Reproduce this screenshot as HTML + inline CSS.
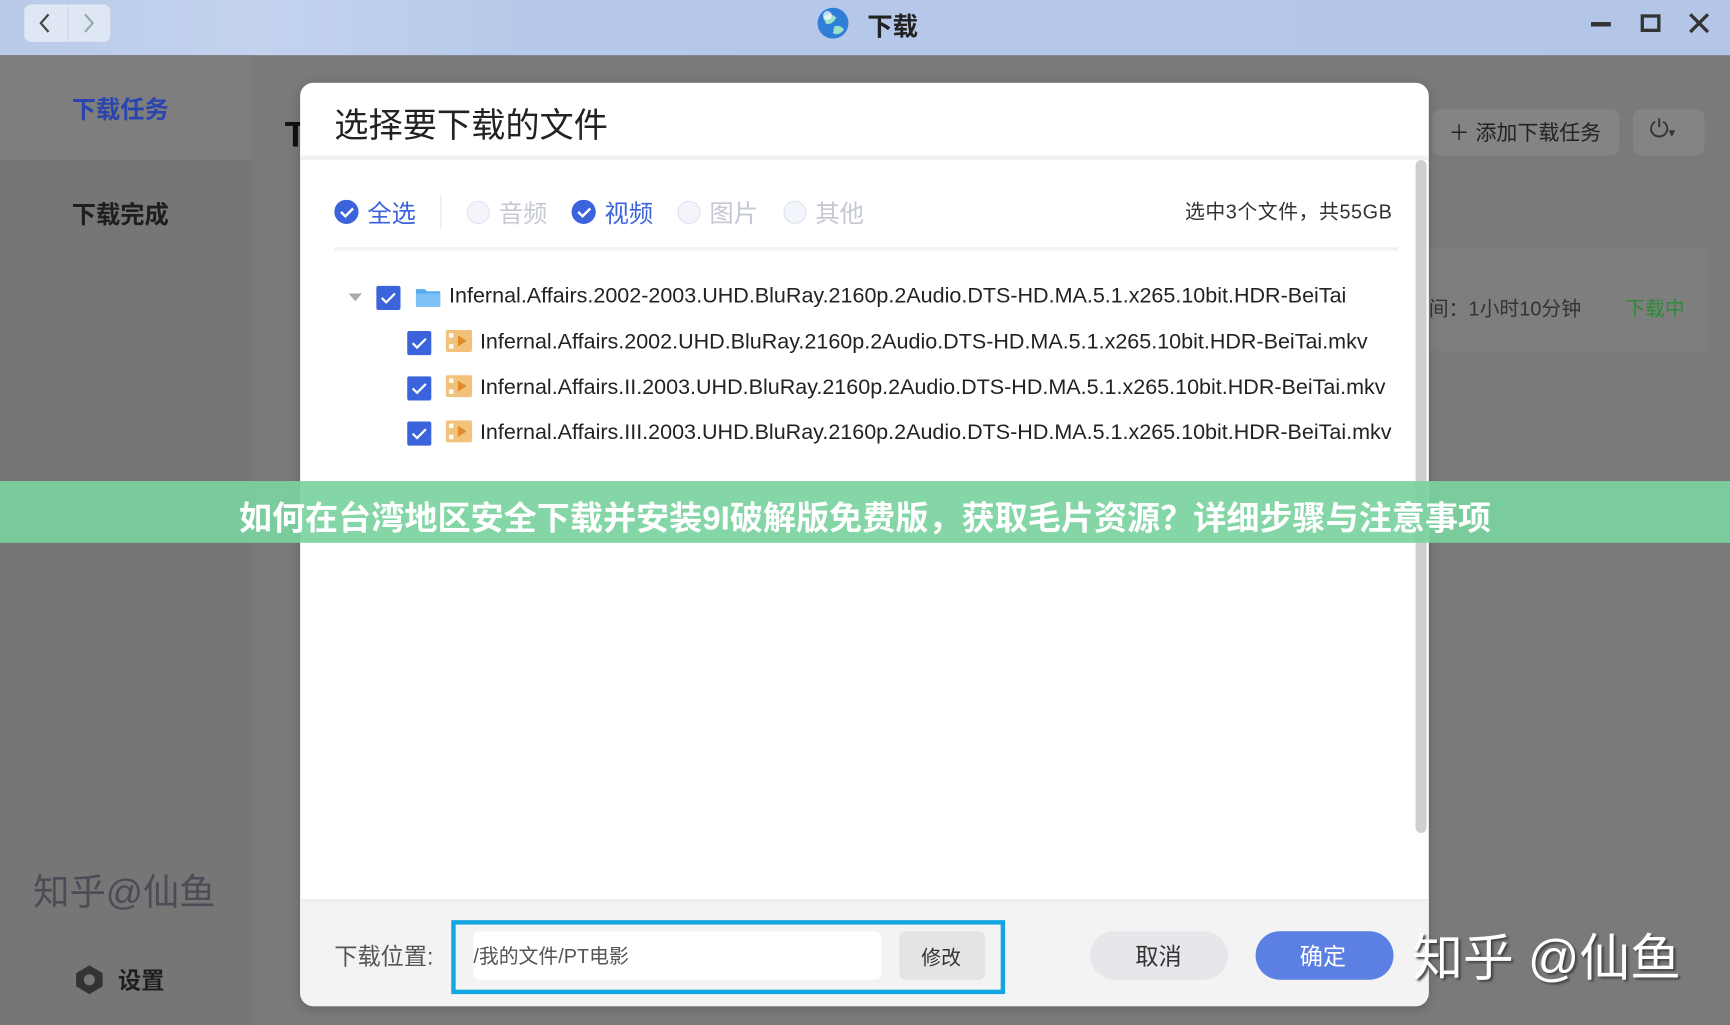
<!DOCTYPE html>
<html><head><meta charset="utf-8"><style>
*{margin:0;padding:0;box-sizing:border-box}
html,body{width:1730px;height:1025px;overflow:hidden;background:#777}
#s{position:absolute;left:0;top:0;width:1568px;height:929px;transform:scale(1.10332);transform-origin:0 0;font-family:"Liberation Sans","Noto Sans CJK SC",sans-serif;background:#7a7a7a}
.a{position:absolute}
.t{white-space:nowrap}
</style></head><body><div id="s">
<div class="a" style="left:0;top:0;width:1568px;height:50px;background:linear-gradient(90deg,#b9cae8,#c3d3ee 15%,#b7c9ea 30%,#b5c8e9 60%,#b4c6e8)"></div>
<div class="a" style="left:22px;top:4px;width:78px;height:34px;background:#dfe7f5;border-radius:6px"></div>
<div class="a" style="left:61px;top:6px;width:1px;height:30px;background:#c8d2e4"></div>
<svg class="a" style="left:30px;top:8px" width="64" height="26"><path d="M14 5 L7 13 L14 21" stroke="#444" stroke-width="2" fill="none"/><path d="M47 5 L54 13 L47 21" stroke="#9aa" stroke-width="2" fill="none"/></svg>
<svg class="a" style="left:738px;top:4px" width="34" height="34"><circle cx="17" cy="17" r="14" fill="#2f7fd8"/><path d="M8 12 q6 -6 12 0 q-3 6 -9 6z M18 20 q6 -2 9 3 q-5 6 -10 3z" fill="#9ee0c8"/><circle cx="12" cy="10" r="4" fill="#fff" opacity=".7"/></svg>
<div class="a t" style="left:786px;top:5px;font-size:23px;font-weight:bold;color:#222">下载</div>
<div class="a" style="left:1442px;top:20px;width:18px;height:4px;background:#333"></div>
<div class="a" style="left:1487px;top:13px;width:18px;height:16px;border:3px solid #333"></div>
<svg class="a" style="left:1530px;top:11px" width="20" height="20"><path d="M2 2L18 18M18 2L2 18" stroke="#333" stroke-width="3"/></svg>
<div class="a" style="left:0;top:50px;width:228px;height:95px;background:#7e7e7e"></div>
<div class="a" style="left:0;top:145px;width:228px;height:784px;background:#767676"></div>
<div class="a t" style="left:65px;top:82px;font-size:22px;font-weight:bold;color:#2a45b0">下载任务</div>
<div class="a t" style="left:65px;top:177px;font-size:22px;font-weight:bold;color:#1e1e1e">下载完成</div>
<div class="a t" style="left:30px;top:782px;font-size:33px;color:#4a4d55">知乎@仙鱼</div>
<svg class="a" style="left:66px;top:873px" width="30" height="30"><path d="M15 2 L27 9 V21 L15 28 L3 21 V9Z" fill="#333"/><circle cx="15" cy="15" r="5" fill="#777"/></svg>
<div class="a t" style="left:107px;top:873px;font-size:21px;font-weight:bold;color:#1e1e1e">设置</div>
<div class="a t" style="left:258px;top:104px;font-size:32px;font-weight:bold;color:#111">T</div>
<div class="a" style="left:1298px;top:99px;width:170px;height:42px;background:#848484;border-radius:8px"></div>
<div class="a t" style="left:1313px;top:106px;font-size:19px;color:#222">＋ 添加下载任务</div>
<div class="a" style="left:1480px;top:99px;width:65px;height:42px;background:#848484;border-radius:8px"></div>
<div class="a t" style="left:1495px;top:104px;font-size:22px;color:#333">⏻<span style="font-size:12px">▾</span></div>
<div class="a" style="left:1295px;top:225px;width:253px;height:93px;background:#7e7e7e"></div>
<div class="a t" style="left:1295px;top:266px;font-size:18px;color:#333">间：1小时10分钟</div>
<div class="a t" style="left:1473px;top:266px;font-size:18px;color:#2f8a3a">下载中</div>

<div class="a" style="left:272px;top:75px;width:1023px;height:837px;background:#fff;border-radius:12px;overflow:hidden;box-shadow:0 2px 10px rgba(0,0,0,.2)">
<div class="a t" style="left:31px;top:13px;font-size:31px;color:#222">选择要下载的文件</div>
<div class="a" style="left:0;top:66px;width:1023px;height:4px;background:#f1f1f1"></div>
<div class="a" style="left:1011px;top:70px;width:10px;height:610px;background:#cfcfcf;border-radius:5px"></div>
<div class="a" style="left:0;top:740px;width:1023px;height:97px;background:#f3f3f3;border-top:2px solid #ececec"></div>
</div>
<svg class="a" style="left:303px;top:181px" width="24" height="24"><circle cx="11" cy="11" r="11" fill="#3b63dc"/><path d="M6 11l4 4 7-7" stroke="#fff" stroke-width="2.2" fill="none"/></svg>
<div class="a t" style="left:333px;top:176px;font-size:22px;color:#3b63dc">全选</div>
<div class="a" style="left:399px;top:177px;width:1px;height:30px;background:#e6e6e6"></div>
<div class="a" style="left:423px;top:182px;width:21px;height:21px;border-radius:50%;border:1.5px solid #dde3f2;background:#f3f5fb"></div>
<div class="a t" style="left:452px;top:176px;font-size:22px;color:#c4c8d2">音频</div>
<svg class="a" style="left:518px;top:181px" width="24" height="24"><circle cx="11" cy="11" r="11" fill="#3b63dc"/><path d="M6 11l4 4 7-7" stroke="#fff" stroke-width="2.2" fill="none"/></svg>
<div class="a t" style="left:548px;top:176px;font-size:22px;color:#3b63dc">视频</div>
<div class="a" style="left:614px;top:182px;width:21px;height:21px;border-radius:50%;border:1.5px solid #dde3f2;background:#f3f5fb"></div>
<div class="a t" style="left:643px;top:176px;font-size:22px;color:#c4c8d2">图片</div>
<div class="a" style="left:710px;top:182px;width:21px;height:21px;border-radius:50%;border:1.5px solid #dde3f2;background:#f3f5fb"></div>
<div class="a t" style="left:739px;top:176px;font-size:22px;color:#c4c8d2">其他</div>
<div class="a t" style="left:1074px;top:178px;font-size:18px;color:#333;letter-spacing:.5px">选中3个文件，共55GB</div>
<div class="a" style="left:303px;top:224px;width:964px;height:3px;background:#f1f1f1"></div>
<svg class="a" style="left:315px;top:265px" width="14" height="10"><path d="M1 1h12L7 8z" fill="#aaa"/></svg>
<svg class="a" style="left:341px;top:259px" width="22" height="22"><rect width="22" height="22" rx="2" fill="#3b63dc"/><path d="M5 11l4 4 8-8" stroke="#fff" stroke-width="2" fill="none"/></svg>
<svg class="a" style="left:376px;top:259px" width="24" height="20"><path d="M1 3h8l2 2h12v14H1z" fill="#5aaaf0"/><rect x="1" y="7" width="22" height="12" fill="#7cc0f6"/></svg>
<div class="a t" style="left:407px;top:257px;font-size:19.5px;color:#222">Infernal.Affairs.2002-2003.UHD.BluRay.2160p.2Audio.DTS-HD.MA.5.1.x265.10bit.HDR-BeiTai</div>
<svg class="a" style="left:369px;top:300px" width="22" height="22"><rect width="22" height="22" rx="2" fill="#3b63dc"/><path d="M5 11l4 4 8-8" stroke="#fff" stroke-width="2" fill="none"/></svg>
<svg class="a" style="left:404px;top:299px" width="24" height="20"><rect width="24" height="20" rx="2" fill="#f0c27a"/><rect x="3" y="3" width="4" height="4" fill="#fff"/><rect x="3" y="13" width="4" height="4" fill="#fff"/><path d="M11 5l8 5-8 5z" fill="#e08a2a"/></svg>
<div class="a t" style="left:435px;top:299px;font-size:19.5px;color:#222">Infernal.Affairs.2002.UHD.BluRay.2160p.2Audio.DTS-HD.MA.5.1.x265.10bit.HDR-BeiTai.mkv</div>
<svg class="a" style="left:369px;top:341px" width="22" height="22"><rect width="22" height="22" rx="2" fill="#3b63dc"/><path d="M5 11l4 4 8-8" stroke="#fff" stroke-width="2" fill="none"/></svg>
<svg class="a" style="left:404px;top:340px" width="24" height="20"><rect width="24" height="20" rx="2" fill="#f0c27a"/><rect x="3" y="3" width="4" height="4" fill="#fff"/><rect x="3" y="13" width="4" height="4" fill="#fff"/><path d="M11 5l8 5-8 5z" fill="#e08a2a"/></svg>
<div class="a t" style="left:435px;top:340px;font-size:19.5px;color:#222">Infernal.Affairs.II.2003.UHD.BluRay.2160p.2Audio.DTS-HD.MA.5.1.x265.10bit.HDR-BeiTai.mkv</div>
<svg class="a" style="left:369px;top:382px" width="22" height="22"><rect width="22" height="22" rx="2" fill="#3b63dc"/><path d="M5 11l4 4 8-8" stroke="#fff" stroke-width="2" fill="none"/></svg>
<svg class="a" style="left:404px;top:381px" width="24" height="20"><rect width="24" height="20" rx="2" fill="#f0c27a"/><rect x="3" y="3" width="4" height="4" fill="#fff"/><rect x="3" y="13" width="4" height="4" fill="#fff"/><path d="M11 5l8 5-8 5z" fill="#e08a2a"/></svg>
<div class="a t" style="left:435px;top:381px;font-size:19.5px;color:#222">Infernal.Affairs.III.2003.UHD.BluRay.2160p.2Audio.DTS-HD.MA.5.1.x265.10bit.HDR-BeiTai.mkv</div>
<div class="a t" style="left:303px;top:851px;font-size:21px;color:#555">下载位置:</div>
<div class="a" style="left:409px;top:834px;width:502px;height:67px;border:4px solid #14a6e0;background:#f3f3f3"></div>
<div class="a" style="left:429px;top:844px;width:370px;height:44px;background:#fff;border-radius:6px"></div>
<div class="a t" style="left:429px;top:853px;font-size:18px;color:#555">/我的文件/PT电影</div>
<div class="a" style="left:815px;top:844px;width:78px;height:44px;background:#e4e4e4;border-radius:6px"></div>
<div class="a t" style="left:835px;top:854px;font-size:18px;color:#333">修改</div>
<div class="a" style="left:988px;top:844px;width:125px;height:44px;background:#e6e7ea;border-radius:22px"></div>
<div class="a t" style="left:1029px;top:851px;font-size:21px;color:#333">取消</div>
<div class="a" style="left:1138px;top:844px;width:125px;height:44px;background:#5b7fe2;border-radius:22px"></div>
<div class="a t" style="left:1178px;top:851px;font-size:21px;color:#fff">确定</div>
<div class="a t" style="left:1280px;top:832px;font-size:46px;color:#fff;text-shadow:2px 2px 2px #444">知乎 @仙鱼</div>
<div class="a" style="left:0;top:436px;width:1568px;height:56px;background:rgba(122,210,158,.92)"></div>
<div class="a t" style="left:0;top:445px;width:1568px;text-align:center;font-size:30px;font-weight:bold;color:#fff">如何在台湾地区安全下载并安装9I破解版免费版，获取毛片资源？详细步骤与注意事项</div>
</div></body></html>
